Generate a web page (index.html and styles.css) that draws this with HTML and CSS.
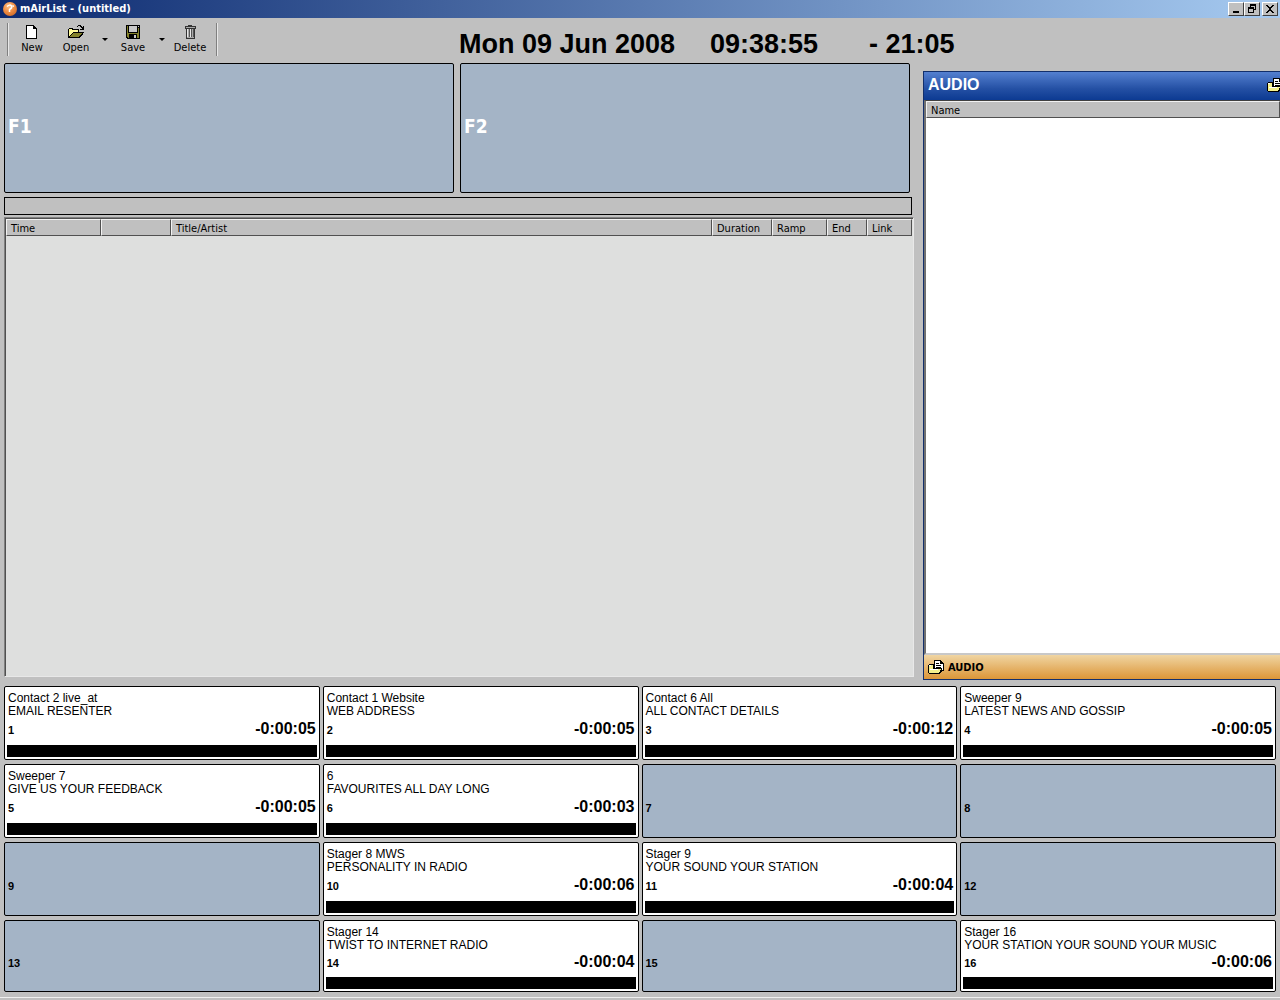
FILE: index.html
```html
<!DOCTYPE html>
<html lang="en">
<head>
<meta charset="utf-8">
<title>mAirList - (untitled)</title>
<link rel="stylesheet" href="styles.css">
</head>
<body>
<svg class="defs" aria-hidden="true">
  <symbol id="folder-doc" viewBox="0 0 16 14">
    <path fill="#000" d="M6 0h7v1h1v1h1v1h1v8h-2v1h-1v1h-1v1H1v-1H0V5h1V4h5z"/>
    <path fill="#fff" d="M7 1h5v3h3v6h-1V8H7z"/>
    <path fill="#f4f08c" d="M1 5h4v4h8v1h-1v2h-1v1H1z"/>
    <path fill="#fff" d="M1 5h2v1H1zM2 9h8v1H2z"/>
    <path fill="#000" d="M8 3h3v1H8zM8 5h5v1H8zM8 7h5v1H8z"/>
  </symbol>
</svg>
<header class="titlebar">
  <svg class="app-logo" viewBox="0 0 14 14"><defs><radialGradient id="orb" cx=".4" cy=".3" r=".75"><stop offset="0" stop-color="#ffc48a"/><stop offset=".5" stop-color="#f09048"/><stop offset="1" stop-color="#d06c28"/></radialGradient></defs><circle cx="7" cy="7" r="7" fill="url(#orb)"/><path d="M4 4.500q3-2.500 4.500-.5 1 2-2 3.500v2.500M9.500 3.500l1.500 1" fill="none" stroke="#fff" stroke-width="1.500"/></svg>
  <h1 class="title">mAirList - (untitled)</h1>
  <div class="window-buttons">
    <button class="winbtn" aria-label="Minimize"><svg viewBox="0 0 12 10"><path d="M3 7h6v2H3z"/></svg></button>
    <button class="winbtn" aria-label="Restore"><svg viewBox="0 0 12 10"><path fill-rule="evenodd" d="M4 0h6v6H8v3H2V3h2zM5 2v1h3v2h1V2zM3 5v3h4V5z"/></svg></button>
    <button class="winbtn close" aria-label="Close"><svg viewBox="0 0 12 10"><path d="M2 1h2v1h1v1h2V2h1V1h2v1H9v1H8v1H7v2h1v1h1v1h1v1H8V8H7V7H5v1H4v1H2V8h1V7h1V6h1V4H4V3H3V2H2z"/></svg></button>
  </div>
</header>
<div class="toolbar">
  <div class="tools">
    <button class="tool"><svg viewBox="0 0 16 14"><path d="M2 0h8v1h1v1h1v1h1v11H2z"/><path fill="#fff" d="M3 1h6v3h3v9H3z"/></svg>New</button>
    <button class="tool"><svg viewBox="0 0 16 14"><path d="M9 1h1V0h3v1h1v1h1V1h1v4h-4V4h2V3h-1V2h-1V1h-2v1H9zM1 3h4v1h6v3h5v1h-1v2h-1v1h-1v1h-1v1H0V4h1z"/><path fill="#fffb9a" d="M1 4h3v1h6v2H5v1H4v1H3v1H2v1H1z"/><path fill="#84822a" d="M5 8h9v1h-1v1h-1v1h-1v1H2v-1h1v-1h1V9h1z"/></svg>Open</button>
    <button class="drop" aria-label="Open recent"></button>
    <button class="tool"><svg viewBox="0 0 16 14"><path d="M1 0h14v14H2v-1H1z"/><path fill="#84822a" d="M2 1h1v7h10V3h1v10h-2V9H4v4H3v-1H2z"/><path fill="#c8c8c8" d="M4 1h8v6H4zM9 10h2v3H9zM13 1h1v1h-1z"/></svg>Save</button>
    <button class="drop" aria-label="Save options"></button>
    <button class="tool"><svg viewBox="0 0 16 14"><path fill="#333" d="M6 0h4v1h4v3h-1v10H4V4H3V1h3z"/><path fill="#aaa" d="M4 2h9v1H4zM5 4h7v9H5z"/><path fill="#e8e8e8" d="M5 4h1v8H5zM8 4h1v8H8z"/><path fill="#555" d="M7 4h1v8H7zM9 4h1v8H9zM11 4h1v8h-1z"/></svg>Delete</button>
  </div>
  <div class="clock"><time class="date">Mon 09 Jun 2008</time><time class="now">09:38:55</time><span>- 21:05</span></div>
</div>
<main class="main">
  <section class="deck-column">
    <div class="players"><div class="player">F1</div><div class="player">F2</div></div>
    <div class="progress"></div>
    <div class="playlist">
      <table>
        <colgroup><col class="c-time"><col class="c-icon"><col><col class="c-dur"><col class="c-ramp"><col class="c-end"><col class="c-link"></colgroup>
        <thead><tr><th>Time</th><th></th><th>Title/Artist</th><th>Duration</th><th>Ramp</th><th>End</th><th>Link</th></tr></thead>
      </table>
    </div>
  </section>
  <aside class="browser">
    <div class="browser-head"><h2>AUDIO</h2><svg class="folder"><use href="#folder-doc"/></svg></div>
    <div class="files"><table><thead><tr><th>Name</th></tr></thead></table></div>
    <button class="browser-tab"><svg class="folder"><use href="#folder-doc"/></svg>AUDIO</button>
  </aside>
</main>
<section class="carts">
  <button class="cart loaded"><span>Contact 2 live_at</span><span>EMAIL RESENTER</span><span class="info"><b>1</b><strong>-0:00:05</strong></span><i></i></button>
  <button class="cart loaded"><span>Contact 1 Website</span><span>WEB ADDRESS</span><span class="info"><b>2</b><strong>-0:00:05</strong></span><i></i></button>
  <button class="cart loaded"><span>Contact 6 All</span><span>ALL CONTACT DETAILS</span><span class="info"><b>3</b><strong>-0:00:12</strong></span><i></i></button>
  <button class="cart loaded"><span>Sweeper 9</span><span>LATEST NEWS AND GOSSIP</span><span class="info"><b>4</b><strong>-0:00:05</strong></span><i></i></button>
  <button class="cart loaded"><span>Sweeper 7</span><span>GIVE US YOUR FEEDBACK</span><span class="info"><b>5</b><strong>-0:00:05</strong></span><i></i></button>
  <button class="cart loaded"><span>6</span><span>FAVOURITES ALL DAY LONG</span><span class="info"><b>6</b><strong>-0:00:03</strong></span><i></i></button>
  <button class="cart"><span class="info"><b>7</b></span></button>
  <button class="cart"><span class="info"><b>8</b></span></button>
  <button class="cart"><span class="info"><b>9</b></span></button>
  <button class="cart loaded"><span>Stager 8 MWS</span><span>PERSONALITY IN RADIO</span><span class="info"><b>10</b><strong>-0:00:06</strong></span><i></i></button>
  <button class="cart loaded"><span>Stager 9</span><span>YOUR SOUND YOUR STATION</span><span class="info"><b>11</b><strong>-0:00:04</strong></span><i></i></button>
  <button class="cart"><span class="info"><b>12</b></span></button>
  <button class="cart"><span class="info"><b>13</b></span></button>
  <button class="cart loaded"><span>Stager 14</span><span>TWIST TO INTERNET RADIO</span><span class="info"><b>14</b><strong>-0:00:04</strong></span><i></i></button>
  <button class="cart"><span class="info"><b>15</b></span></button>
  <button class="cart loaded"><span>Stager 16</span><span>YOUR STATION YOUR SOUND YOUR MUSIC</span><span class="info"><b>16</b><strong>-0:00:06</strong></span><i></i></button>
</section>
<footer class="statusbar"></footer>
</body>
</html>
```
FILE: styles.css
```css
* { box-sizing: border-box; }
body {
  margin: 0;
  min-height: 100vh;
  display: flex;
  flex-direction: column;
  background: #c0c0c0;
  color: #000;
  font: 11px/13px "DejaVu Sans Condensed", "DejaVu Sans", sans-serif;
  overflow-x: hidden;
}
button { font: inherit; color: inherit; border: 0; padding: 0; background: none; border-radius: 0; }
svg { display: block; flex: none; shape-rendering: crispEdges; }
h1, h2 { margin: 0; }
table { width: 100%; table-layout: fixed; border-collapse: separate; border-spacing: 0; }
th {
  height: 17px;
  padding: 1px 0 0 4px;
  text-align: left;
  font-weight: 400;
  line-height: 13px;
  background: #c0c0c0;
  border: 1px solid #f2f2f2;
  border-right-color: #505050;
  border-bottom-color: #505050;
  overflow: hidden;
}
.defs { position: absolute; width: 0; height: 0; }

.titlebar {
  display: flex;
  align-items: center;
  height: 18px;
  padding: 0 2px 0 3px;
  background: linear-gradient(90deg, #0c2a70, #a6caf0);
  color: #fff;
}
.app-logo { width: 14px; height: 14px; margin-right: 3px; shape-rendering: auto; }
.title { flex: 1; font-size: 11px; line-height: 18px; font-weight: 700; }
.window-buttons { display: flex; }
.winbtn {
  width: 16px;
  height: 14px;
  padding: 1px;
  background: #c0c0c0;
  border: 1px solid #fff;
  border-right-color: #404040;
  border-bottom-color: #404040;
}
.winbtn svg { width: 12px; height: 10px; }
.close { margin-left: 2px; }

.toolbar { display: flex; height: 45px; }
.tools {
  display: flex;
  align-items: flex-start;
  height: 33px;
  margin: 5px 242px 0 7px;
  padding: 2px 4px 0 2px;
  border-left: 1px solid #808080;
  border-right: 1px solid #808080;
  box-shadow: inset 1px 0 #e8e8e8, 1px 0 #e8e8e8;
}
.tool { display: flex; flex-direction: column; align-items: center; width: 44px; gap: 2px; }
.tool svg { width: 16px; height: 14px; }
.drop { width: 13px; height: 28px; display: grid; place-items: center; }
.drop::after { content: ""; border: 3px solid transparent; border-top-color: #000; border-bottom: 0; }
.clock {
  display: flex;
  padding-top: 11px;
  white-space: nowrap;
  font: 700 27px/30px "Liberation Sans", Arial, sans-serif;
}
.date { width: 251px; }
.now { width: 159px; }

.main { flex: 1; display: grid; grid-template-columns: minmax(0, 1fr) 357px; gap: 9px; padding-left: 4px; }
.deck-column { display: flex; flex-direction: column; gap: 4px; padding-bottom: 3px; }
.players { display: flex; gap: 6px; height: 130px; margin-right: 4px; }
.player {
  flex: 1;
  display: flex;
  align-items: center;
  padding: 0 3px 4px;
  border: 1px solid #000;
  border-radius: 2px;
  background: #a4b4c6;
  color: #fff;
  font-size: 19px;
  font-weight: 700;
}
.progress { height: 18px; margin-right: 2px; border: 1px solid #000; }
.playlist {
  flex: 1;
  margin-top: -2px;
  background: #dedfde;
  border: 1px solid #808080;
  border-right-color: #e8e8e8;
  border-bottom-color: #e8e8e8;
  box-shadow: inset 1px 1px #505050;
  padding: 1px 1px 0 1px;
}
.c-time { width: 95px; }
.c-icon { width: 70px; }
.c-dur { width: 60px; }
.c-ramp { width: 55px; }
.c-end { width: 40px; }
.c-link { width: 45px; }

.browser {
  display: flex;
  flex-direction: column;
  margin: 8px 0 0;
  border: 1px solid #122f6c;
  border-right: 0;
  overflow: hidden;
}
.browser-head {
  display: flex;
  align-items: center;
  height: 28px;
  padding: 0 0 2px 4px;
  background: linear-gradient(#5480d0, #2450a4 60%, #0c3a92);
  color: #fff;
}
.browser-head h2 { flex: 1; font: 700 16px/20px "Liberation Sans", Arial, sans-serif; }
.browser-head .folder { margin-right: -3px; }
.folder { width: 16px; height: 14px; }
.files {
  flex: 1;
  background: #fff;
  border-top: 1px solid #404040;
  border-left: 2px solid #707070;
  border-bottom: 2px solid #c8c8c8;
}
.browser-tab {
  display: flex;
  align-items: center;
  gap: 4px;
  height: 24px;
  padding-left: 4px;
  background: linear-gradient(#f0d5a2, #dc9638);
  font-weight: 700;
}

.carts {
  display: grid;
  grid-template-columns: repeat(4, minmax(0, 1fr));
  grid-template-rows: repeat(3, 74px) 72px;
  gap: 4px 3px;
  padding: 6px 4px 5px;
}
.cart {
  display: flex;
  flex-direction: column;
  justify-content: center;
  padding: 5px 2px 2px;
  border: 1px solid #000;
  border-radius: 2px;
  background: #a4b4c6;
  text-align: left;
  font: 12px/13px "Liberation Sans", Arial, sans-serif;
}
.loaded { justify-content: flex-start; background: #fff; }
.cart > span { padding: 0 1px; white-space: nowrap; }
.cart .info {
  display: flex;
  flex: 1;
  align-items: center;
  justify-content: space-between;
  padding-bottom: 6px;
}
.cart:not(.loaded) .info { padding: 12px 1px 4px; }
.info b { font-size: 11px; padding-top: 3px; }
.info strong { font-size: 16px; }
.cart i { height: 12px; background: #000; }
.statusbar { height: 3px; border-top: 1px solid #f0f0f0; }
```
